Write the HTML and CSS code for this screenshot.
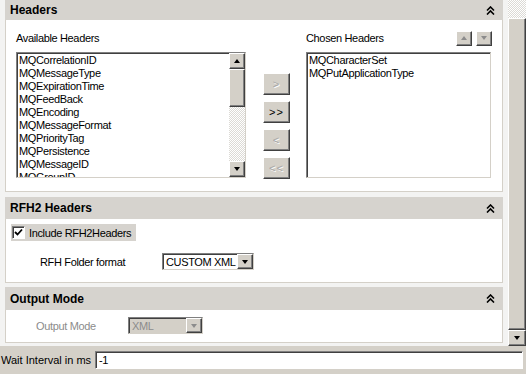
FILE: index.html
```html
<!DOCTYPE html>
<html lang="en">

<head>
    <meta charset="UTF-8">
    <title>Headers</title>
    <link rel="stylesheet" href="styles.css">
</head>

<body>
    <div class="window">
        <div class="main">
            <div class="content">
                <!-- Headers -->
                <section class="panel">
                    <div class="panel-title title-headers">
                        <span>Headers</span>
                        <svg class="collapse" width="9" height="9" viewBox="0 0 9 9"><polyline points="1,4.5 4.5,1 8,4.5" /><polyline points="1,8.5 4.5,5 8,8.5" /></svg>
                    </div>
                    <div class="panel-body headers-body">
                        <div class="col col-available">
                            <div class="col-label">Available Headers</div>
                            <div class="listbox">
                                <ul class="items">
                                    <li>MQCorrelationID</li>
                                    <li>MQMessageType</li>
                                    <li>MQExpirationTime</li>
                                    <li>MQFeedBack</li>
                                    <li>MQEncoding</li>
                                    <li>MQMessageFormat</li>
                                    <li>MQPriorityTag</li>
                                    <li>MQPersistence</li>
                                    <li>MQMessageID</li>
                                    <li>MQGroupID</li>
                                </ul>
                                <div class="vscroll list-scroll">
                                    <div class="raised sb-btn"><span class="tri-up"></span></div>
                                    <div class="raised sb-thumb"></div>
                                    <div class="sb-track"></div>
                                    <div class="raised sb-btn"><span class="tri-down"></span></div>
                                </div>
                            </div>
                        </div>
                        <div class="move-buttons">
                            <button class="raised mv" disabled>&gt;</button>
                            <button class="raised mv">&gt;&gt;</button>
                            <button class="raised mv" disabled>&lt;</button>
                            <button class="raised mv" disabled>&lt;&lt;</button>
                        </div>
                        <div class="col col-chosen">
                            <div class="col-label">
                                <span>Chosen Headers</span>
                                <span class="order-btns">
                                    <span class="raised order-btn"><span class="tri-up grey"></span></span>
                                    <span class="raised order-btn"><span class="tri-down grey"></span></span>
                                </span>
                            </div>
                            <div class="listbox">
                                <ul class="items">
                                    <li>MQCharacterSet</li>
                                    <li>MQPutApplicationType</li>
                                </ul>
                            </div>
                        </div>
                    </div>
                </section>

                <!-- RFH2 Headers -->
                <section class="panel">
                    <div class="panel-title">
                        <span>RFH2 Headers</span>
                        <svg class="collapse" width="9" height="9" viewBox="0 0 9 9"><polyline points="1,4.5 4.5,1 8,4.5" /><polyline points="1,8.5 4.5,5 8,8.5" /></svg>
                    </div>
                    <div class="panel-body rfh-body">
                        <label class="check-row">
                            <span class="checkbox"><svg width="9" height="9" viewBox="0 0 9 9"><polyline points="1,4 3.5,6.5 8,1.5" /></svg></span>
                            <span>Include RFH2Headers</span>
                        </label>
                        <div class="field-row">
                            <span class="field-label">RFH Folder format</span>
                            <div class="combo combo-format">
                                <span class="combo-value">CUSTOM XML</span>
                                <span class="raised combo-btn"><span class="tri-down"></span></span>
                            </div>
                        </div>
                    </div>
                </section>

                <!-- Output Mode -->
                <section class="panel panel-output">
                    <div class="panel-title title-output">
                        <span>Output Mode</span>
                        <svg class="collapse" width="9" height="9" viewBox="0 0 9 9"><polyline points="1,4.5 4.5,1 8,4.5" /><polyline points="1,8.5 4.5,5 8,8.5" /></svg>
                    </div>
                    <div class="panel-body output-body">
                        <div class="field-row">
                            <span class="field-label disabled">Output Mode</span>
                            <div class="combo combo-output disabled">
                                <span class="combo-value">XML</span>
                                <span class="raised combo-btn"><span class="tri-down grey"></span></span>
                            </div>
                        </div>
                    </div>
                </section>
            </div>

            <div class="vscroll main-scroll">
                <div class="sb-track top-track"></div>
                <div class="raised sb-thumb main-thumb"></div>
                <div class="raised sb-btn"><span class="tri-down"></span></div>
            </div>
        </div>

        <div class="footer">
            <span class="footer-label">Wait Interval in ms</span>
            <div class="textbox">-1</div>
        </div>
    </div>
</body>

</html>
```

FILE: styles.css
```css
* {
    box-sizing: border-box;
}

body {
    margin: 0;
    font-family: "Liberation Sans", Arial, sans-serif;
    font-size: 11px;
    letter-spacing: -0.35px;
    color: #000;
    background-color: #f3f3f2;
    white-space: nowrap;
}

.window {
    width: 526px;
    height: 374px;
    overflow: hidden;
    display: flex;
    flex-direction: column;
}

.main {
    display: flex;
    height: 346px;
}

.content {
    width: 508px;
    padding: 0 5px;
}

/* panels */
.panel {
    background-color: #fff;
}

.panel + .panel {
    margin-top: 5px;
}

.panel-output {
    margin-top: 4px !important;
}

.panel-title {
    display: flex;
    align-items: center;
    justify-content: space-between;
    height: 22px;
    padding: 0 8px 0 5px;
    background-color: #d6d3ce;
    font-size: 12px;
    font-weight: bold;
    letter-spacing: 0;
}

.title-headers {
    height: 20px;
}

.title-output {
    height: 23px;
}

.collapse {
    fill: none;
    stroke: #000;
    stroke-width: 1.6;
}

.panel-body {
    border: 1px solid #d4d0c8;
    border-top: none;
}

/* classic controls */
.raised {
    background-color: #d4d0c8;
    border: 1px solid;
    border-color: #fff #404040 #404040 #fff;
    box-shadow: inset -1px -1px 0 #808080;
}

.tri-up, .tri-down {
    display: inline-block;
    width: 0;
    height: 0;
    border-left: 3.5px solid transparent;
    border-right: 3.5px solid transparent;
}

.tri-up {
    border-bottom: 4px solid #000;
}

.tri-down {
    border-top: 4px solid #000;
}

.tri-up.grey {
    border-bottom-color: #8c8c8c;
}

.tri-down.grey {
    border-top-color: #8c8c8c;
}

/* headers section */
.headers-body {
    display: flex;
    align-items: flex-start;
    height: 172px;
    padding: 10px 11px 13px 10px;
}

.col-available {
    width: 230px;
}

.col-chosen {
    width: 185px;
}

.col-label {
    display: flex;
    align-items: center;
    justify-content: space-between;
    height: 16px;
    margin-bottom: 6px;
}

.listbox {
    display: flex;
    height: 126px;
    background-color: #fff;
    border: 1px solid;
    border-color: #808080 #d4d0c8 #d4d0c8 #808080;
    box-shadow: inset 1px 1px 0 #404040;
}

.items {
    flex: 1;
    margin: 0;
    padding: 1px 2px;
    list-style: none;
    overflow: hidden;
    line-height: 13px;
}

.vscroll {
    display: flex;
    flex-direction: column;
}

.list-scroll {
    width: 16px;
}

.sb-btn {
    display: flex;
    align-items: center;
    justify-content: center;
    height: 16px;
}

.sb-thumb {
    height: 38px;
}

.sb-track {
    flex: 1;
    background-color: #fff;
    background-image: repeating-conic-gradient(#dcdad5 0 25%, #fff 0 50%);
    background-size: 2px 2px;
}

.move-buttons {
    display: flex;
    flex-direction: column;
    gap: 6px;
    width: 27px;
    margin: 43px 16px 0 17px;
}

.mv {
    height: 22px;
    padding: 0;
    font-family: inherit;
    font-size: 11px;
    letter-spacing: 1px;
    color: #000;
}

.mv:disabled {
    color: #a6a6a6;
    text-shadow: 1px 1px 0 #fff;
}

.order-btns {
    display: flex;
    gap: 4px;
    margin-right: -1px;
}

.order-btn {
    display: flex;
    align-items: center;
    justify-content: center;
    width: 16px;
    height: 15px;
}

/* RFH2 section */
.rfh-body {
    height: 64px;
    padding: 5px 0 0 5px;
}

.check-row {
    display: flex;
    align-items: center;
    gap: 4px;
    width: 125px;
    height: 17px;
    padding-left: 1px;
    background-color: #d6d3ce;
}

.checkbox {
    display: flex;
    align-items: center;
    justify-content: center;
    width: 13px;
    height: 13px;
    background-color: #fff;
    border: 1px solid;
    border-color: #808080 #fff #fff #808080;
    box-shadow: inset 1px 1px 0 #404040;
}

.checkbox svg {
    fill: none;
    stroke: #000;
    stroke-width: 1.8;
}

.field-row {
    display: flex;
    align-items: center;
}

.rfh-body .field-row {
    margin-top: 12px;
    padding-left: 29px;
}

.rfh-body .field-label {
    width: 122px;
}

.combo {
    display: flex;
    align-items: center;
    height: 17px;
    background-color: #fff;
    border: 1px solid;
    border-color: #808080 #d4d0c8 #d4d0c8 #808080;
    box-shadow: inset 1px 1px 0 #404040;
}

.combo-value {
    flex: 1;
    padding-left: 3px;
    overflow: hidden;
}

.combo-btn {
    display: flex;
    align-items: center;
    justify-content: center;
    flex: none;
    width: 16px;
    height: 15px;
}

.combo-format {
    width: 92px;
}

/* output section */
.output-body {
    height: 33px;
    padding: 7px 0 0 30px;
}

.output-body .field-label {
    width: 92px;
}

.combo-output {
    width: 75px;
}

.disabled {
    color: #8c8c8c;
}

.combo.disabled {
    background-color: #d4d0c8;
}

/* main scrollbar */
.main-scroll {
    width: 18px;
}

.top-track {
    flex: none;
    height: 18px;
}

.main-thumb {
    flex: 1;
}

/* footer */
.footer {
    display: flex;
    align-items: center;
    height: 28px;
    padding-left: 1px;
    background-color: #d4d0c8;
}

.footer-label {
    width: 94px;
    letter-spacing: 0;
}

.textbox {
    width: 428px;
    height: 18px;
    padding: 2px 3px;
    line-height: 13px;
    background-color: #fff;
    border: 1px solid;
    border-color: #808080 #fff #fff #808080;
    box-shadow: inset 1px 1px 0 #404040;
}
```
